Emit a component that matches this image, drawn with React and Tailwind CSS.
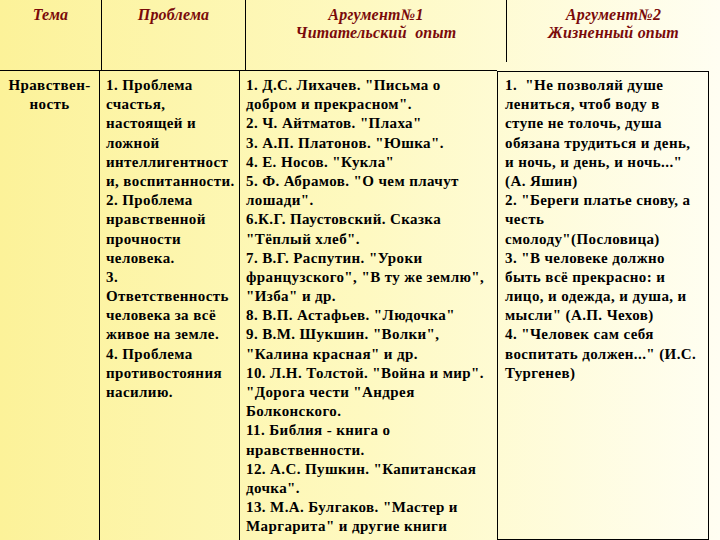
import React from "react";

const col2 = [
  "1. Проблема",
  "счастья,",
  "настоящей и",
  "ложной",
  "интеллигентност",
  "и, воспитанности.",
  "2. Проблема",
  "нравственной",
  "прочности",
  "человека.",
  "3.",
  "Ответственность",
  "человека за всё",
  "живое на земле.",
  "4. Проблема",
  "противостояния",
  "насилию.",
];

const col3 = [
  "1. Д.С. Лихачев. \"Письма о",
  "добром и прекрасном\".",
  "2. Ч. Айтматов. \"Плаха\"",
  "3. А.П. Платонов. \"Юшка\".",
  "4. Е. Носов. \"Кукла\"",
  "5. Ф. Абрамов. \"О чем плачут",
  "лошади\".",
  "6.К.Г. Паустовский. Сказка",
  "\"Тёплый хлеб\".",
  "7. В.Г. Распутин. \"Уроки",
  "французского\", \"В ту же землю\",",
  "\"Изба\" и др.",
  "8. В.П. Астафьев. \"Людочка\"",
  "9. В.М. Шукшин. \"Волки\",",
  "\"Калина красная\" и др.",
  "10. Л.Н. Толстой. \"Война и мир\".",
  "\"Дорога чести \"Андрея",
  "Болконского.",
  "11. Библия - книга о",
  "нравственности.",
  "12. А.С. Пушкин. \"Капитанская",
  "дочка\".",
  "13. М.А. Булгаков. \"Мастер и",
  "Маргарита\" и другие книги",
];

const col4 = [
  "1.  \"Не позволяй душе",
  "лениться, чтоб воду в",
  "ступе не толочь, душа",
  "обязана трудиться и день,",
  "и ночь, и день, и ночь...\"",
  "(А. Яшин)",
  "2. \"Береги платье снову, а",
  "честь",
  "смолоду\"(Пословица)",
  "3. \"В человеке должно",
  "быть всё прекрасно: и",
  "лицо, и одежда, и душа, и",
  "мысли\" (А.П. Чехов)",
  "4. \"Человек сам себя",
  "воспитать должен...\" (И.С.",
  "Тургенев)",
];

function Lines({ items }) {
  return (
    <div className="flex flex-col">
      {items.map((t, i) => (
        <div key={i} className="whitespace-pre h-[19.2px] leading-[19.2px]">
          {t}
        </div>
      ))}
    </div>
  );
}

export default function App() {
  return (
    <div className="w-[720px] h-[540px] overflow-hidden flex flex-col bg-gradient-to-r from-[#fcf299] via-[#fef9c0] to-[#fffef2] font-['Liberation_Serif','Times_New_Roman',serif]">
      {/* header */}
      <div className="flex h-[70px] text-[16px] leading-[18px] font-bold italic text-[#7a0a0a] tracking-[0.2px]">
        <div className="w-[102px] border-r border-black flex justify-center pt-[6px] h-[70px]">
          Тема
        </div>
        <div className="w-[144px] border-r border-black flex justify-center pt-[6px] h-[70px]">
          Проблема
        </div>
        <div className="w-[261px] border-r border-black flex flex-col items-center pt-[6px] h-[62px]">
          <div>Аргумент№1</div>
          <div>Читательский&nbsp; опыт</div>
        </div>
        <div className="flex-1 flex flex-col items-center pt-[6px]">
          <div>Аргумент№2</div>
          <div>Жизненный опыт</div>
        </div>
      </div>
      {/* body */}
      <div className="flex flex-1 text-[15px] font-bold text-black tracking-[0.4px]">
        <div className="w-[100px] border-t border-r border-black flex flex-col items-center pt-[5px]">
          <div className="h-[19.2px] leading-[19.2px]">Нравствен-</div>
          <div className="h-[19.2px] leading-[19.2px]">ность</div>
        </div>
        <div className="w-[140px] border-t border-r border-black pl-[6px] pt-[5px]">
          <Lines items={col2} />
        </div>
        <div className="w-[257px] border-t border-black pl-[6px] pt-[5px]">
          <Lines items={col3} />
        </div>
        <div className="w-[212px] mt-[1px] border border-black pl-[7px] pt-[4px]">
          <Lines items={col4} />
        </div>
      </div>
    </div>
  );
}
